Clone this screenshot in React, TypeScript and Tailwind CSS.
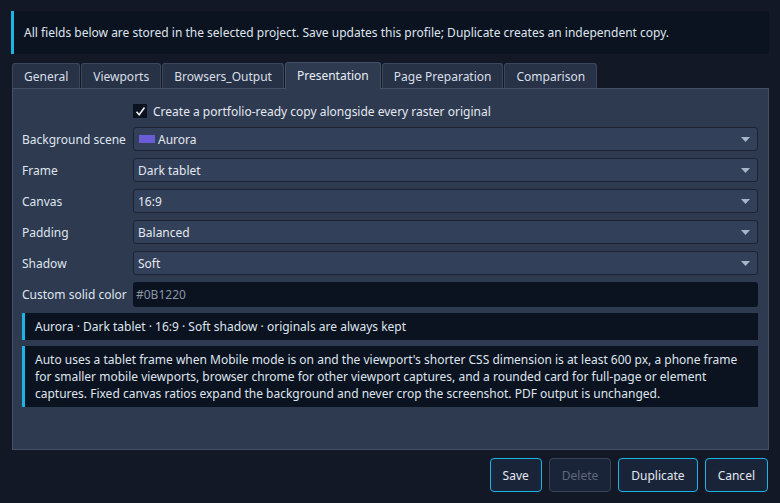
import React from "react";

const font = { fontFamily: '"Noto Sans", "DejaVu Sans", sans-serif' };

function Arrow() {
  return (
    <svg width="9" height="5" viewBox="0 0 9 5" className="shrink-0">
      <path d="M0 0 H9 L4.5 5 Z" fill="#a9b4c6" />
    </svg>
  );
}

function Combo({ children }: { children: React.ReactNode }) {
  return (
    <div className="flex-1 h-[24px] flex items-center justify-between pl-[4px] pr-[7px] rounded-[3px] border border-[#1b2335] bg-[#334059] text-[#e3e8f0]">
      <div className="flex items-center gap-[3px]">{children}</div>
      <Arrow />
    </div>
  );
}

function Row({ label, children }: { label: string; children: React.ReactNode }) {
  return (
    <div className="flex items-center">
      <div className="w-[111px] whitespace-nowrap text-[#dfe5ee]">{label}</div>
      {children}
    </div>
  );
}

const tabs = ["General", "Viewports", "Browsers_Output", "Presentation", "Page Preparation", "Comparison"];

export default function App() {
  return (
    <div style={font} className="w-[780px] h-[503px] bg-[#121826] text-[12px] leading-[17px] text-[#e3e8f0] flex flex-col pl-[11px] pr-[11px] pt-[11px] overflow-hidden">
      <div className="h-[43px] bg-[#0b1220] border-l-[3px] border-[#1ab4e6] flex items-center pl-[10px] text-[#dfe5ee]">
        All fields below are stored in the selected project. Save updates this profile; Duplicate creates an independent copy.
      </div>
      <div className="flex items-end gap-[1px] ml-[1px] mt-[8px] h-[26px]">
        {tabs.map((t) => {
          const sel = t === "Presentation";
          return (
            <div
              key={t}
              className={
                sel
                  ? "h-[27px] -mb-[1px] pl-[11px] pr-[11px] pb-[2px] flex items-center bg-[#2e3a50] border border-b-0 border-[#445066] rounded-t-[3px] text-[#e8edf5] relative z-10"
                  : "h-[25px] pl-[11px] pr-[11px] flex items-center bg-[#273246] border border-b-0 border-[#3c475b] rounded-t-[3px] text-[#d9dfe8]"
              }
            >
              {t}
            </div>
          );
        })}
      </div>
      <div className="ml-[1px] w-[757px] h-[362px] bg-[#2e3a50] border border-[#445066] pl-[9px] pr-[10px] pt-[13px] flex flex-col">
        <div className="flex items-center ml-[111px] h-[18px] gap-[6px]">
          <div className="w-[14px] h-[14px] bg-[#0b1220] flex items-center justify-center">
            <svg width="11" height="11" viewBox="0 0 11 11">
              <path d="M1.5 5.8 L4.2 8.8 L9.5 1.5" stroke="#f1f4f8" strokeWidth="1.6" fill="none" />
            </svg>
          </div>
          <span>Create a portfolio-ready copy alongside every raster original</span>
        </div>
        <div className="flex flex-col gap-[7px] mt-[7px]">
          <Row label="Background scene">
            <Combo>
              <span className="w-[16px] h-[8px] bg-[#6b5bd6] inline-block ml-[1px]" />
              <span>Aurora</span>
            </Combo>
          </Row>
          <Row label="Frame">
            <Combo>Dark tablet</Combo>
          </Row>
          <Row label="Canvas">
            <Combo>16:9</Combo>
          </Row>
          <Row label="Padding">
            <Combo>Balanced</Combo>
          </Row>
          <Row label="Shadow">
            <Combo>Soft</Combo>
          </Row>
          <Row label="Custom solid color">
            <div className="flex-1 h-[25px] rounded-[3px] bg-[#0b1220] flex items-center pl-[3px] text-[#8a95a8]">#0B1220</div>
          </Row>
        </div>
        <div className="mt-[6px] h-[27px] bg-[#0b1220] border-l-[3px] border-[#1ab4e6] flex items-center pl-[10px] text-[#dfe5ee]">
          Aurora · Dark tablet · 16:9 · Soft shadow · originals are always kept
        </div>
        <div className="mt-[6px] h-[61px] bg-[#0b1220] border-l-[3px] border-[#1ab4e6] pl-[10px] pr-[8px] pt-[5px] text-[#dfe5ee]">
          Auto uses a tablet frame when Mobile mode is on and the viewport's shorter CSS dimension is at least 600 px, a phone frame for smaller mobile viewports, browser chrome for other viewport captures, and a rounded card for full-page or element captures. Fixed canvas ratios expand the background and never crop the screenshot. PDF output is unchanged.
        </div>
      </div>
      <div className="flex justify-end gap-[7px] mt-[8px] mr-[1px]">
        <button className="h-[34px] px-[12px] rounded-[4px] border border-[#1ab4e6] bg-[#1a2439] text-[#e3e8f0]">Save</button>
        <button className="h-[34px] px-[12px] rounded-[4px] border border-[#38445a] bg-[#1a2439] text-[#5d687c]">Delete</button>
        <button className="h-[34px] px-[12px] rounded-[4px] border border-[#1ab4e6] bg-[#1a2439] text-[#e3e8f0]">Duplicate</button>
        <button className="h-[34px] px-[12px] rounded-[4px] border border-[#1ab4e6] bg-[#1a2439] text-[#e3e8f0]">Cancel</button>
      </div>
    </div>
  );
}
